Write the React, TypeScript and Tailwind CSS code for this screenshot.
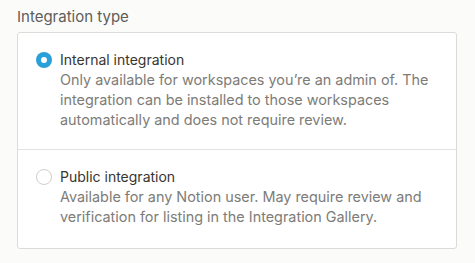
import React from "react";

function Radio({ checked }: { checked: boolean }) {
  if (checked) {
    return (
      <div className="mt-[2px] flex h-4 w-4 shrink-0 items-center justify-center rounded-full bg-[#2a9fd8]">
        <div className="h-[6px] w-[6px] rounded-full bg-white" />
      </div>
    );
  }
  return <div className="mt-[2px] h-4 w-4 shrink-0 rounded-full border border-[#cfcecb] bg-white" />;
}

function Option({
  checked,
  title,
  desc,
  last,
}: {
  checked: boolean;
  title: string;
  desc: string;
  last?: boolean;
}) {
  return (
    <div className={`flex gap-2 px-[18px] pt-[17px] ${last ? "pb-[21px]" : "pb-[19px] border-b border-[#e3e2e0]"}`}>
      <Radio checked={checked} />
      <div className="flex flex-col">
        <div className="text-[14px] leading-[20px] text-[#37352f]">{title}</div>
        <div className="text-[14.4px] leading-[20px] text-[#7d7c78]">{desc}</div>
      </div>
    </div>
  );
}

export default function App() {
  return (
    <div
      className="h-[263px] w-[475px] bg-[#fbfbfa] pl-[17px] pr-[18px] pt-[7px]"
      style={{ fontFamily: "Inter, 'Noto Sans', sans-serif" }}
    >
      <div className="text-[15px] leading-[20px] text-[#5e5d5a]">Integration type</div>
      <div className="mt-[5px] rounded-[3px] border border-[#dcdbd8] bg-white">
        <Option
          checked
          title="Internal integration"
          desc="Only available for workspaces you’re an admin of. The integration can be installed to those workspaces automatically and does not require review."
        />
        <Option
          checked={false}
          last
          title="Public integration"
          desc="Available for any Notion user. May require review and verification for listing in the Integration Gallery."
        />
      </div>
    </div>
  );
}
